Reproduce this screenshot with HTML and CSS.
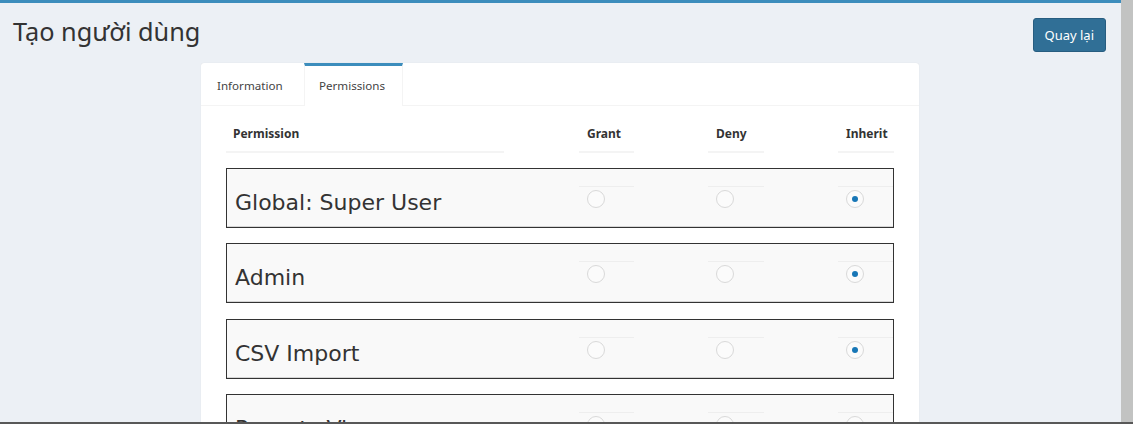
FILE: index.html
```html
<!DOCTYPE html>
<html lang="vi">
<head>
<meta charset="utf-8">
<title>Tạo người dùng</title>
<link rel="stylesheet" href="styles.css">
</head>
<body>
<div class="app">
  <div class="main">
    <div class="topbar"></div>
    <header class="page-head">
      <h1 class="page-title">Tạo người dùng</h1>
      <button class="btn-back" type="button">Quay lại</button>
    </header>
    <section class="card">
      <ul class="tabs">
        <li class="tab">Information</li>
        <li class="tab tab-active">Permissions</li>
      </ul>
      <div class="card-body">
        <div class="perm-head">
          <div class="th">Permission</div>
          <div class="th">Grant</div>
          <div class="th">Deny</div>
          <div class="th">Inherit</div>
        </div>
        <div class="perm-row">
          <div class="perm-name">Global: Super User</div>
          <div class="cell"><input class="radio" type="radio" name="p1"></div>
          <div class="cell"><input class="radio" type="radio" name="p1"></div>
          <div class="cell"><input class="radio" type="radio" name="p1" checked></div>
        </div>
        <div class="perm-row">
          <div class="perm-name">Admin</div>
          <div class="cell"><input class="radio" type="radio" name="p2"></div>
          <div class="cell"><input class="radio" type="radio" name="p2"></div>
          <div class="cell"><input class="radio" type="radio" name="p2" checked></div>
        </div>
        <div class="perm-row">
          <div class="perm-name">CSV Import</div>
          <div class="cell"><input class="radio" type="radio" name="p3"></div>
          <div class="cell"><input class="radio" type="radio" name="p3"></div>
          <div class="cell"><input class="radio" type="radio" name="p3" checked></div>
        </div>
        <div class="perm-row">
          <div class="perm-name">Reports View</div>
          <div class="cell"><input class="radio" type="radio" name="p4"></div>
          <div class="cell"><input class="radio" type="radio" name="p4"></div>
          <div class="cell"><input class="radio" type="radio" name="p4" checked></div>
        </div>
      </div>
    </section>
  </div>
  <div class="scroll-strip"></div>
</div>
</body>
</html>
```

FILE: styles.css
```css
* { box-sizing: border-box; }
html, body { margin: 0; padding: 0; }
body {
  font-family: "Noto Sans", "Open Sans", sans-serif;
  color: #333;
  background: #ecf0f5;
}
.app {
  display: flex;
  height: 424px;
  overflow: hidden;
  border-bottom: 2px solid #585858;
}
.main {
  flex: 1;
  background: #ecf0f5;
  overflow: hidden;
}
.scroll-strip {
  width: 12px;
  flex: none;
  background: #c2c3c2;
}
.topbar {
  height: 3px;
  background: #3c8dbc;
}
.page-head {
  display: flex;
  justify-content: space-between;
  align-items: flex-start;
  padding: 0 15px 0 13px;
}
.page-title {
  margin: 11px 0 0;
  font-size: 25.3px;
  font-weight: 400;
  line-height: 34px;
  color: #333;
}
.btn-back {
  margin-top: 15px;
  height: 34px;
  padding: 0 11px;
  font-family: "Noto Sans", sans-serif;
  font-size: 13px;
  color: #fff;
  background: #306f96;
  border: 1px solid #275d80;
  border-radius: 3px;
}
.card {
  width: 718px;
  margin: 11px 0 0 201px;
  background: #fff;
  border-radius: 3px;
  box-shadow: 0 0 1px rgba(0,0,0,0.12);
  height: 400px;
}
.tabs {
  display: flex;
  margin: 0;
  padding: 0;
  list-style: none;
  height: 43px;
  border-bottom: 1px solid #f4f4f4;
}
.tab {
  padding: 0 21px 0 16px;
  font-size: 11.6px;
  color: #444;
  border-top: 3px solid transparent;
  line-height: 39px;
  width: 103px;
}
.tab-active {
  width: 99px;
  padding: 0 0 0 14px;
  border-top-color: #3c8dbc;
  border-left: 1px solid #f4f4f4;
  border-right: 1px solid #f4f4f4;
  background: #fff;
  height: 43px;
}
.card-body {
  padding: 10px 25px 0;
}
.perm-head,
.perm-row {
  display: grid;
  grid-template-columns: 278px 55px 56px 56px;
  column-gap: 75px 74px;
}
.perm-head {
  grid-template-columns: 278px 75px 55px 74px 56px 74px 56px;
  column-gap: 0;
}
.th {
  padding: 9px 7px;
  font-size: 12px;
  font-weight: 700;
  line-height: 17px;
  border-bottom: 2px solid #f4f4f4;
}
.th + .th { grid-column: span 1; padding-left: 8px; }
.th:nth-child(2) { grid-column: 3; }
.th:nth-child(3) { grid-column: 5; }
.th:nth-child(4) { grid-column: 7; }
.perm-row {
  grid-template-columns: 277px 75px 55px 74px 56px 74px 55px;
  column-gap: 0;
  margin-top: 15.33px;
  height: 60px;
  background: #f9f9f9;
  border: 1px solid #333;
  box-shadow: inset 0 -1px 0 #d6d6d6;
  align-items: start;
}
.perm-row .cell:nth-child(2) { grid-column: 3; }
.perm-row .cell:nth-child(3) { grid-column: 5; }
.perm-row .cell:nth-child(4) { grid-column: 7; }
.perm-head + .perm-row { margin-top: 15px; }
.perm-name {
  padding: 21px 0 0 8px;
  font-family: "DejaVu Sans", sans-serif;
  font-size: 22px;
  line-height: 26px;
  color: #333;
  white-space: nowrap;
}
.cell {
  margin-top: 17px;
  padding: 3px 8px 0;
  border-top: 1px solid #eeeeee;
  height: 30px;
}
.radio {
  appearance: none;
  -webkit-appearance: none;
  display: block;
  margin: 0;
  width: 18px;
  height: 18px;
  border: 1px solid #d9d9d9;
  border-radius: 50%;
  background: #fbfbfb;
  position: relative;
}
.radio:checked::after {
  content: "";
  position: absolute;
  left: 5px;
  top: 5px;
  width: 6px;
  height: 6px;
  border-radius: 50%;
  background: #1776b6;
}
```
